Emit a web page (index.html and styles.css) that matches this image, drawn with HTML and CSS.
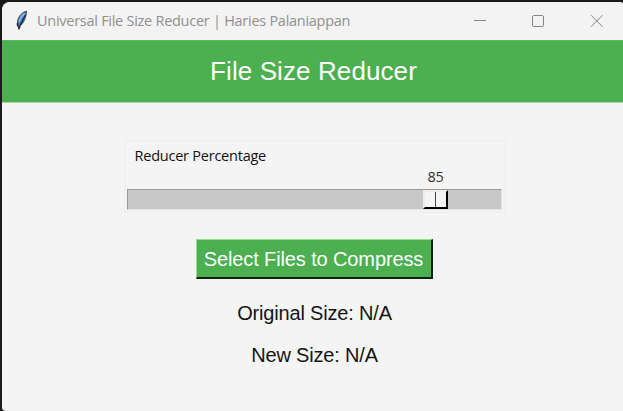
FILE: index.html
```html
<!DOCTYPE html>
<html lang="en">
<head>
<meta charset="utf-8">
<title>Universal File Size Reducer</title>
<link rel="stylesheet" href="styles.css">
</head>
<body>
<main class="window">
  <header class="titlebar">
    <svg class="feather" width="14" height="22" viewBox="0 0 14 22">
      <path d="M11.5 1.2C7 2.2 3.2 6.500 2.500 11.500L2 15.500 4.500 16.500C8.500 13.500 11.500 7 11.500 1.200Z" fill="#3e79bd" stroke="#4a4c50" stroke-width="1"/>
      <path d="M9.800 3.500C6.500 6 5 9 4.200 12" fill="none" stroke="#82b9ee" stroke-width="1.700"/>
      <path d="M10.300 5C8.500 9 6 12.500 3.800 19.500M2.400 13L3.700 18.500 5.800 14.500" fill="none" stroke="#1d2530" stroke-width="1.100"/>
    </svg>
    <span class="caption">Universal File Size Reducer | Haries Palaniappan</span>
    <svg class="controls" width="131" height="14" viewBox="0 0 131 14" fill="none" stroke="#868686">
      <path d="M1 6.500H13"/>
      <rect x="59.500" y="1.500" width="11" height="11" rx="1.300"/>
      <path d="M118 1.200L129.600 12.800M129.600 1.200L118 12.800"/>
    </svg>
  </header>
  <h1 class="banner">File Size Reducer</h1>
  <section class="scale">
    <div class="scale-label">Reducer Percentage</div>
    <div class="scale-value">85</div>
    <div class="trough"><div class="slider"></div></div>
  </section>
  <button class="select">Select Files to Compress</button>
  <p class="size original">Original Size: N/A</p>
  <p class="size new">New Size: N/A</p>
</main>
</body>
</html>
```
FILE: styles.css
```css
* { box-sizing: border-box; }
body {
  margin: 0;
  height: 411px;
  padding: 2px 0 0 2px;
  overflow: hidden;
  background: #1c191a;
  font-family: "Liberation Sans", sans-serif;
}
.window {
  display: flex;
  flex-direction: column;
  align-items: center;
  height: 409px;
  background: #f4f4f4;
  border-radius: 8px 3px 0 4px;
  overflow: hidden;
}
.titlebar {
  display: flex;
  align-items: center;
  width: 100%;
  height: 38px;
  flex: none;
  padding: 0 19px 0 13px;
  background: #f3f3f3;
}
.feather { margin-right: 8px; }
.caption {
  flex: 1;
  color: #909090;
  font: 14.5px/20px "Open Sans", sans-serif;
  letter-spacing: -0.27px;
  white-space: nowrap;
}
.controls { flex: none; }
.banner {
  width: 100%;
  height: 63px;
  flex: none;
  margin: 0;
  padding-left: 2px;
  border-top: 1px solid #5db760;
  border-bottom: 1px solid #a5d8a7;
  background: #4caf50;
  color: #fff;
  font-size: 26px;
  font-weight: 400;
  line-height: 60px;
  letter-spacing: 0.1px;
  text-align: center;
}
.scale {
  width: 382px;
  height: 73px;
  flex: none;
  margin: 37px 0 0 4px;
  border: 2px solid #f0f0f0;
  padding: 4px 1px 0;
  font-family: "Open Sans", sans-serif;
  color: #111;
}
.scale-label {
  height: 20px;
  padding-left: 8px;
  font-size: 14.5px;
  line-height: 20px;
  letter-spacing: -0.23px;
}
.scale-value {
  height: 23px;
  padding: 1px 0 0 301px;
  color: #333;
  font-size: 14.5px;
  line-height: 20px;
  letter-spacing: -0.3px;
}
.trough {
  width: 375px;
  height: 21px;
  padding-left: 295px;
  background: #c8c8c8;
  border: 1px solid #999;
  border-right-color: #e4e4e4;
  border-bottom-color: #e4e4e4;
}
.slider {
  width: 25px;
  height: 19px;
  border: 2px solid #ededed;
  border-right-color: #000;
  border-bottom-color: #000;
  background: linear-gradient(#444, #444) 10px 0 / 1px 100% no-repeat #f4f4f4;
}
.select {
  width: 237px;
  height: 40px;
  flex: none;
  margin: 26px 0 0 3px;
  padding: 0;
  border: solid;
  border-width: 1px 2px 2px 1px;
  border-color: #8be38e #0d200e #0d200e #8be38e;
  background: #4caf50;
  color: #fff;
  font: 20px/36px "Liberation Sans", sans-serif;
  letter-spacing: -0.12px;
}
.size {
  margin: 0;
  color: #151515;
  font-size: 20px;
  line-height: 24px;
  letter-spacing: -0.18px;
}
.original { margin: 22px 0 0 4px; }
.new { margin: 18px 0 0 4px; }
```
